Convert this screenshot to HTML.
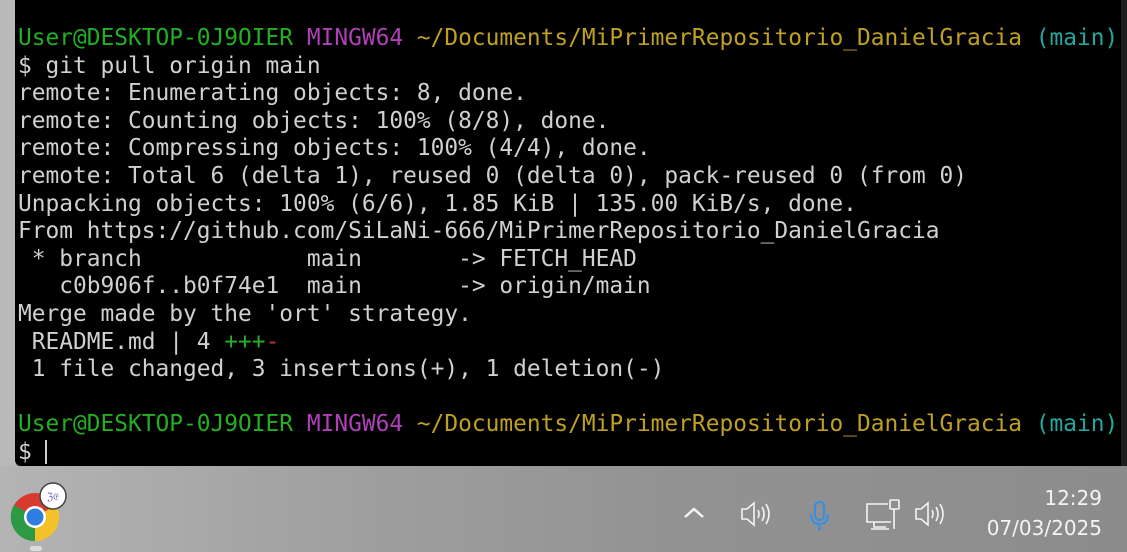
<!DOCTYPE html>
<html><head><meta charset="utf-8"><style>
html,body{margin:0;padding:0;width:1127px;height:552px;overflow:hidden;background:#9a9a9a}
#left{position:absolute;left:0;top:0;width:16px;height:466px;background:#b9b9b9}
#term{position:absolute;left:15px;top:0;width:1106px;height:466px;background:#000;border-bottom-left-radius:6px}
#rstrip{position:absolute;left:1121px;top:0;width:6px;height:466px;background:#1e1e1e}
pre{position:absolute;left:18px;top:25px;margin:0;font-family:"DejaVu Sans Mono","Liberation Mono",monospace;font-size:22.85px;line-height:27.6px;color:#d0d0d0;white-space:pre}
.g{color:#22b022}.m{color:#b040b8}.y{color:#c0a020}.c{color:#20a8a0}.gr{color:#28b028}.r{color:#c83030}
#task{position:absolute;left:0;top:466px;width:1127px;height:86px;background:linear-gradient(90deg,#b4b4b4 0%,#a0a0a0 30%,#929292 60%,#8c8c8c 100%)}
.t{position:absolute;color:#f4f4f4;font-family:"DejaVu Sans","Liberation Sans",sans-serif;font-size:20px}
</style></head><body>
<div id="left"></div><div id="term"></div><div id="rstrip"></div>
<pre><span class="g">User@DESKTOP-0J9OIER</span> <span class="m">MINGW64</span> <span class="y">~/Documents/MiPrimerRepositorio_DanielGracia</span> <span class="c">(main)</span>
$ git pull origin main
remote: Enumerating objects: 8, done.
remote: Counting objects: 100% (8/8), done.
remote: Compressing objects: 100% (4/4), done.
remote: Total 6 (delta 1), reused 0 (delta 0), pack-reused 0 (from 0)
Unpacking objects: 100% (6/6), 1.85 KiB | 135.00 KiB/s, done.
From https://github.com/SiLaNi-666/MiPrimerRepositorio_DanielGracia
 * branch            main       -&gt; FETCH_HEAD
   c0b906f..b0f74e1  main       -&gt; origin/main
Merge made by the 'ort' strategy.
 README.md | 4 <span class="gr">+++</span><span class="r">-</span>
 1 file changed, 3 insertions(+), 1 deletion(-)

<span class="g">User@DESKTOP-0J9OIER</span> <span class="m">MINGW64</span> <span class="y">~/Documents/MiPrimerRepositorio_DanielGracia</span> <span class="c">(main)</span>
$ </pre>
<div style="position:absolute;left:45px;top:440px;width:2px;height:24px;background:#ccc"></div>
<div id="task">
<svg style="position:absolute;left:10px;top:16px" width="60" height="64" viewBox="0 0 60 64">
<circle cx="25" cy="35" r="24" fill="#d83a2e"/>
<path d="M25 35 L4 47 A24 24 0 0 0 25 59 Z" fill="#2a9a45"/>
<path d="M25 35 L4 47 A24 24 0 0 1 4 23 Z" fill="#2a9a45"/>
<path d="M25 35 L46 23 A24 24 0 0 1 25 59 Z" fill="#f3c12a"/>
<circle cx="25" cy="35" r="11" fill="#fff"/><circle cx="25" cy="35" r="8.5" fill="#2f7de0"/>
<circle cx="43" cy="14" r="13" fill="#fff" stroke="#444" stroke-width="1.5"/>
<text x="43" y="18" font-size="10" text-anchor="middle" fill="#7060b0" font-family="DejaVu Sans">ℨ𝔈</text>
</svg>
<div style="position:absolute;left:30px;top:80px;width:12px;height:5px;border-radius:3px;background:#ddd"></div>
<svg style="position:absolute;left:680px;top:36px" width="30" height="20"><path d="M5 15 L14 7 L23 15" stroke="#f4f4f4" stroke-width="2.5" fill="none"/></svg>
<svg style="position:absolute;left:740px;top:34px" width="36" height="30" fill="none" stroke="#f4f4f4" stroke-width="1.6"><path d="M2 9h5l7-6v22l-7-6H2z"/><path d="M18 10q2 4 0 8M22 7q4 7 0 14M26 4q6 10 0 20"/></svg>
<svg style="position:absolute;left:808px;top:34px" width="24" height="36" fill="none" stroke="#3a90e0" stroke-width="2.2"><rect x="7" y="2" width="9" height="18" rx="4.5"/><path d="M3 14q0 10 8.5 10q8.5 0 8.5-10M11.5 24v7"/></svg>
<svg style="position:absolute;left:864px;top:32px" width="40" height="40" fill="none" stroke="#f4f4f4" stroke-width="1.6"><path d="M24 6H3v18h24M10 24v5h12M7 31h18"/><rect x="26" y="2" width="9" height="9" rx="1"/><path d="M30 11v20"/></svg>
<svg style="position:absolute;left:914px;top:34px" width="36" height="30" fill="none" stroke="#f4f4f4" stroke-width="1.6"><path d="M2 9h5l7-6v22l-7-6H2z"/><path d="M18 10q2 4 0 8M22 7q4 7 0 14M26 4q6 10 0 20"/></svg>
<div class="t" style="right:25px;top:20px">12:29</div>
<div class="t" style="right:25px;top:50px">07/03/2025</div>
</div>
</body></html>
